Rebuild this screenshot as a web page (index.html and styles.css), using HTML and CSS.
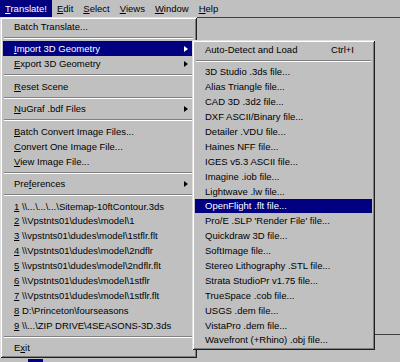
FILE: index.html
```html
<!DOCTYPE html>
<html lang="en">
<head>
<meta charset="UTF-8">
<title>Translate! menu</title>
<link rel="stylesheet" href="styles.css">
</head>
<body>

<div class="menubar">
    <div class="menubar-item open"><u>T</u>ranslate!</div>
    <div class="menubar-item"><u>E</u>dit</div>
    <div class="menubar-item"><u>S</u>elect</div>
    <div class="menubar-item"><u>V</u>iews</div>
    <div class="menubar-item"><u>W</u>indow</div>
    <div class="menubar-item"><u>H</u>elp</div>
</div>

<div class="workspace">
    <div class="pane"></div>
    <div class="tray">
        <div class="tray-btn"></div>
    </div>
</div>

<div class="menu menu-main">
    <div class="item">Batch Translate...</div>
    <div class="sep"></div>
    <div class="item active"><span><u>I</u>mport 3D Geometry</span><span class="arrow"></span></div>
    <div class="item"><span><u>E</u>xport 3D Geometry</span><span class="arrow"></span></div>
    <div class="sep"></div>
    <div class="item"><span><u>R</u>eset Scene</span></div>
    <div class="sep"></div>
    <div class="item"><span><u>N</u>uGraf .bdf Files</span><span class="arrow"></span></div>
    <div class="sep"></div>
    <div class="item"><span><u>B</u>atch Convert Image Files...</span></div>
    <div class="item"><span><u>C</u>onvert One Image File...</span></div>
    <div class="item"><span><u>V</u>iew Image File...</span></div>
    <div class="sep"></div>
    <div class="item"><span>Pre<u>f</u>erences</span><span class="arrow"></span></div>
    <div class="sep"></div>
    <div class="item"><span><u>1</u> \\...\...\...\Sitemap-10ftContour.3ds</span></div>
    <div class="item"><span><u>2</u> \\Vpstnts01\dudes\model\1</span></div>
    <div class="item"><span><u>3</u> \\vpstnts01\dudes\model\1stflr.flt</span></div>
    <div class="item"><span><u>4</u> \\Vpstnts01\dudes\model\2ndflr</span></div>
    <div class="item"><span><u>5</u> \\vpstnts01\dudes\model\2ndflr.flt</span></div>
    <div class="item"><span><u>6</u> \\Vpstnts01\dudes\model\1stflr</span></div>
    <div class="item"><span><u>7</u> \\Vpstnts01\dudes\model\1stflr.flt</span></div>
    <div class="item"><span><u>8</u> D:\Princeton\fourseasons</span></div>
    <div class="item"><span><u>9</u> \\...\ZIP DRIVE\4SEASONS-3D.3ds</span></div>
    <div class="sep"></div>
    <div class="item"><span>E<u>x</u>it</span></div>
</div>

<div class="menu menu-sub">
    <div class="item"><span>Auto-Detect and Load</span><span class="shortcut">Ctrl+I</span></div>
    <div class="sep"></div>
    <div class="item">3D Studio .3ds file...</div>
    <div class="item">Alias Triangle file...</div>
    <div class="item">CAD 3D .3d2 file...</div>
    <div class="item">DXF ASCII/Binary file...</div>
    <div class="item">Detailer .VDU file...</div>
    <div class="item">Haines NFF file...</div>
    <div class="item">IGES v5.3 ASCII file...</div>
    <div class="item">Imagine .iob file...</div>
    <div class="item">Lightwave .lw file...</div>
    <div class="item active">OpenFlight .flt file...</div>
    <div class="item">Pro/E .SLP 'Render File' file...</div>
    <div class="item">Quickdraw 3D file...</div>
    <div class="item">SoftImage file...</div>
    <div class="item">Stereo Lithography .STL file...</div>
    <div class="item">Strata StudioPr v1.75 file...</div>
    <div class="item">TrueSpace .cob file...</div>
    <div class="item">USGS .dem file...</div>
    <div class="item">VistaPro .dem file...</div>
    <div class="item">Wavefront (+Rhino) .obj file...</div>
</div>

</body>
</html>
```

FILE: styles.css
```css
body {
    margin: 0;
    height: 362px;
    overflow: hidden;
    position: relative;
    background: #c0c0c0;
    font-family: "Liberation Sans", Arial, sans-serif;
    font-size: 9.5px;
    color: #000;
}
u {
    text-underline-offset: 1px;
}

/* menu bar */
.menubar {
    display: flex;
    height: 17px;
    line-height: 17px;
}
.menubar-item {
    padding: 0 5px;
}
.menubar-item.open {
    background: #000080;
    color: #fff;
}

/* window behind the menus */
.workspace {
    border-top: 1px solid #404040;
}
.pane {
    height: 316px;
    border-bottom: 1px solid #404040;
}
.tray {
    padding: 24px 0 0 28px;
}
.tray-btn {
    width: 15px;
    height: 4px;
    background: #000080;
}

/* drop-down menus */
.menu {
    position: absolute;
    box-sizing: border-box;
    padding: 2px 3px 3px;
    background: #c0c0c0;
    box-shadow: inset 1px 1px #dfdfdf, inset -1px -1px #202020,
                inset 2px 2px #fff, inset -2px -2px #808080;
}
.menu-main {
    left: 0;
    top: 17px;
    width: 197px;
}
.menu-sub {
    left: 192px;
    top: 40px;
    width: 183px;
}
.item {
    display: flex;
    align-items: center;
    height: 14.9px;
    padding: 0 6px 0 11px;
    white-space: nowrap;
}
.menu-sub .item {
    padding: 0 18px 0 10px;
}
.item.active {
    background: #000080;
    color: #fff;
}
.sep {
    border-top: 1px solid #808080;
    border-bottom: 1px solid #fff;
    margin: 3px 1px 2.6px;
}
.arrow {
    margin-left: auto;
    border-left: 4px solid currentColor;
    border-top: 3.5px solid transparent;
    border-bottom: 3.5px solid transparent;
}
.shortcut {
    margin-left: auto;
}
```
